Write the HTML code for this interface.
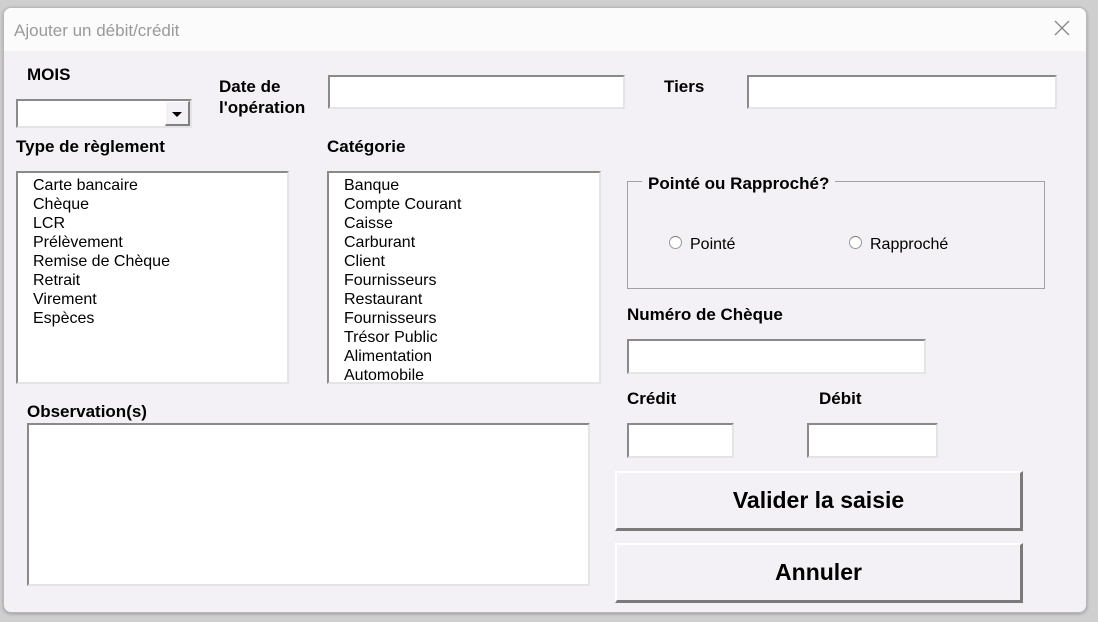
<!DOCTYPE html>
<html><head><meta charset="utf-8"><style>
*{margin:0;padding:0;box-sizing:border-box}
body{width:1098px;height:622px;background:#cfcfcf;position:relative;overflow:hidden;font-family:"Liberation Sans",Arial,sans-serif}
.win{position:absolute;left:3px;top:7px;width:1084px;height:606px;background:#f3f1f5;border:1px solid #b8b8b8;border-radius:8px;overflow:hidden;box-shadow:0 1px 3px rgba(0,0,0,.25)}
.title{position:absolute;left:0;top:0;width:100%;height:43px;background:#fbfbfc}
.title span{position:absolute;left:10px;top:13px;font-size:17px;color:#9a9a9a}
.x{position:absolute;left:1050px;top:12px}
.a{position:absolute}
.lb{position:absolute;font-weight:bold;font-size:17px;color:#000;line-height:21px}
.in{position:absolute;background:#fff;border-top:2px solid #8a8a8a;border-left:2px solid #8a8a8a;border-right:2px solid #e4e4e4;border-bottom:2px solid #e4e4e4}
.list{padding:3px 0 0 15px;font-size:16px;line-height:19px;color:#000}
.btn{position:absolute;background:#f3f1f5;border-top:2px solid #fff;border-left:2px solid #fff;border-right:3px solid #7a7a7a;border-bottom:3px solid #7a7a7a;font-weight:bold;font-size:23px;text-align:center}
.rad{position:absolute;width:13px;height:13px;border-radius:50%;background:#fff;border:1px solid #999;border-top-color:#777}
.rt{position:absolute;font-size:16px}
</style></head><body>
<div class="win">
<div class="title"><span>Ajouter un débit/crédit</span>
<svg class="x" width="16" height="16" viewBox="0 0 16 16"><path d="M1 1L15 15M15 1L1 15" stroke="#888" stroke-width="1.3"/></svg></div>
</div>
<div class="lb" style="left:27px;top:64px">MOIS</div>
<div class="in" style="left:16px;top:99px;width:176px;height:29px"></div>
<div class="a" style="left:165px;top:101px;width:25px;height:25px;background:#f3f1f5;border-top:1px solid #fff;border-left:1px solid #fff;border-right:2px solid #808080;border-bottom:2px solid #808080"><svg width="22" height="22" style="position:absolute;left:0;top:0"><path d="M6 10h10l-5 5z" fill="#000"/></svg></div>
<div class="lb" style="left:219px;top:76px">Date de<br>l'opération</div>
<div class="in" style="left:328px;top:75px;width:297px;height:34px"></div>
<div class="lb" style="left:664px;top:76px">Tiers</div>
<div class="in" style="left:747px;top:75px;width:310px;height:34px"></div>
<div class="lb" style="left:16px;top:136px">Type de règlement</div>
<div class="lb" style="left:327px;top:136px">Catégorie</div>
<div class="in list" style="left:16px;top:171px;width:273px;height:213px">Carte bancaire<br>Chèque<br>LCR<br>Prélèvement<br>Remise de Chèque<br>Retrait<br>Virement<br>Espèces</div>
<div class="in list" style="left:327px;top:171px;width:274px;height:213px">Banque<br>Compte Courant<br>Caisse<br>Carburant<br>Client<br>Fournisseurs<br>Restaurant<br>Fournisseurs<br>Trésor Public<br>Alimentation<br>Automobile</div>
<div class="a" style="left:627px;top:181px;width:418px;height:108px;border:1px solid #a0a0a0"></div>
<div class="lb" style="left:642px;top:173px;background:#f3f1f5;padding:0 6px">Pointé ou Rapproché?</div>
<div class="rad" style="left:669px;top:236px"></div><div class="rt" style="left:690px;top:236px">Pointé</div>
<div class="rad" style="left:849px;top:236px"></div><div class="rt" style="left:870px;top:236px">Rapproché</div>
<div class="lb" style="left:627px;top:304px">Numéro de Chèque</div>
<div class="in" style="left:627px;top:339px;width:299px;height:35px"></div>
<div class="lb" style="left:627px;top:388px">Crédit</div>
<div class="lb" style="left:819px;top:388px">Débit</div>
<div class="in" style="left:627px;top:423px;width:107px;height:35px"></div>
<div class="in" style="left:807px;top:423px;width:131px;height:35px"></div>
<div class="lb" style="left:27px;top:401px">Observation(s)</div>
<div class="in" style="left:27px;top:423px;width:563px;height:163px"></div>
<div class="btn" style="left:615px;top:471px;width:408px;height:60px;line-height:55px">Valider la saisie</div>
<div class="btn" style="left:615px;top:543px;width:408px;height:60px;line-height:55px">Annuler</div>
</body></html>
